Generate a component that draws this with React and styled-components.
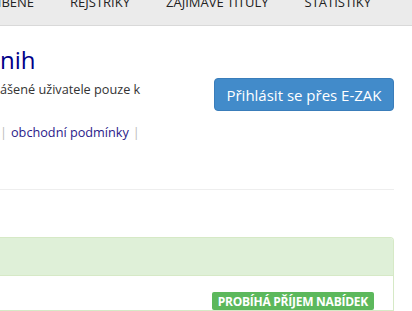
import React from "react";
import styled, { createGlobalStyle } from "styled-components";

const Global = createGlobalStyle`
  html, body { margin: 0; padding: 0; background: #fff; }
  body { font-family: "Open Sans", "DejaVu Sans", sans-serif; overflow: hidden; }
`;

const Page = styled.div`
  width: 412px;
  height: 311px;
  overflow: hidden;
`;

const NavBar = styled.nav`
  height: 25px;
  background: #ebebeb;
  border-bottom: 1px solid #d9d9d9;
  display: flex;
  align-items: flex-start;
  overflow: hidden;
`;

const NavItem = styled.a`
  flex: none;
  font-size: 13px;
  line-height: 13px;
  margin-top: -4px;
  color: #222;
  text-transform: uppercase;
  padding: 0 18px;
  &:first-child { padding-left: 0; margin-left: -9px; }
`;

const Content = styled.div`
  padding-right: 18px;
`;

const Intro = styled.div`
  display: flex;
  justify-content: space-between;
  align-items: flex-start;
  padding-top: 17px;
  padding-bottom: 48px;
  border-bottom: 1px solid #eee;
`;

const TextCol = styled.div`
  display: flex;
  flex-direction: column;
`;

const Title = styled.h1`
  margin: 0;
  font-size: 24px;
  font-weight: 400;
  line-height: 33px;
  color: #000088;
`;

const Para = styled.p`
  margin: 4px 0 0;
  font-size: 12.7px;
  line-height: 18px;
  color: #333;
`;

const Links = styled.div`
  margin-top: 25px;
  font-size: 12.7px;
  line-height: 18px;
  color: #bbb;
  display: flex;
  gap: 4px;
`;

const Link = styled.a`
  color: #2a1a8a;
  text-decoration: none;
`;

const LoginButton = styled.button`
  margin-top: 35px;
  width: 180px;
  height: 33px;
  border: 1px solid #3a7dba;
  border-radius: 4px;
  background: #428bca;
  color: #fff;
  font-family: inherit;
  font-size: 15px;
  padding: 0;
`;

const Panel = styled.section`
  margin-top: 47px;
  border: 1px solid #d6e9c6;
  border-left: none;
  border-radius: 0 4px 0 0;
`;

const PanelHeading = styled.div`
  height: 37px;
  background: #dff0d8;
  border-bottom: 1px solid #d6e9c6;
  border-top-right-radius: 3px;
`;

const PanelBody = styled.div`
  display: flex;
  justify-content: flex-end;
  padding: 16px 19px 0 0;
`;

const Badge = styled.span`
  background: #5cb85c;
  color: #fff;
  font-weight: 700;
  font-size: 12px;
  line-height: 17px;
  padding: 1px 6px 0;
  border-radius: 2px;
  text-transform: uppercase;
  letter-spacing: -0.25px;
`;

export default function App() {
  return (
    <Page>
      <Global />
      <NavBar>
        <NavItem>líbené</NavItem>
        <NavItem>Rejstříky</NavItem>
        <NavItem>Zajímavé tituly</NavItem>
        <NavItem>Statistiky</NavItem>
      </NavBar>
      <Content>
        <Intro>
          <TextCol>
            <Title>nih</Title>
            <Para>ášené uživatele pouze k</Para>
            <Links>
              <span>|</span>
              <Link>obchodní podmínky</Link>
              <span>|</span>
            </Links>
          </TextCol>
          <LoginButton>Přihlásit se přes E-ZAK</LoginButton>
        </Intro>
        <Panel>
          <PanelHeading />
          <PanelBody>
            <Badge>Probíhá příjem nabídek</Badge>
          </PanelBody>
        </Panel>
      </Content>
    </Page>
  );
}
